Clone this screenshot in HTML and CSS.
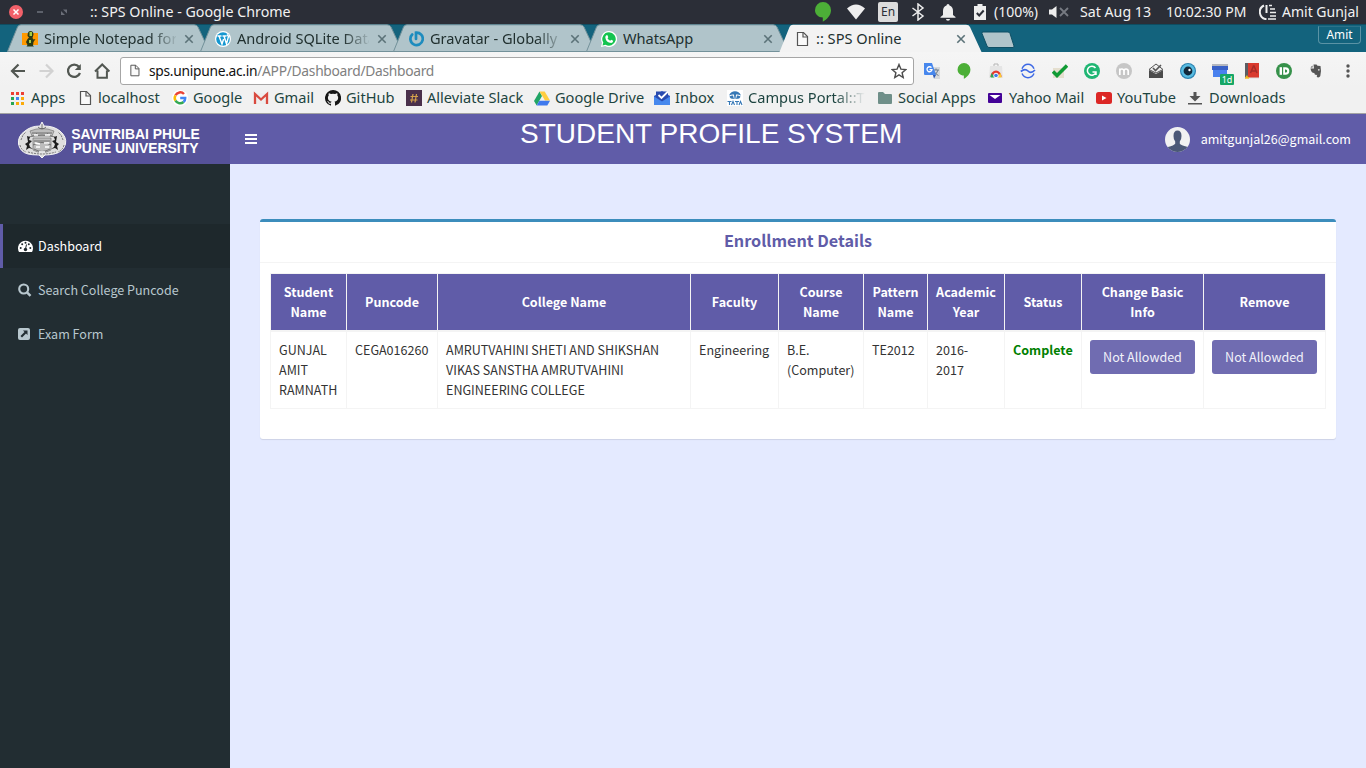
FILE: index.html
```html
<!DOCTYPE html>
<html lang="en">
<head>
<meta charset="utf-8">
<title>:: SPS Online</title>
<link rel="stylesheet" href="styles.css">
</head>
<body>
<svg class="defs" width="0" height="0">
  <defs>
    <symbol id="page" viewBox="0 0 16 16"><path d="M3.5 1.5h6l4 4v9h-10z" fill="#fafafa" stroke="#555" stroke-width="1.2"/><path d="M9 1.5v4.500h4.500" fill="none" stroke="#555" stroke-width="1.2"/></symbol>
    <symbol id="x" viewBox="0 0 10 10"><path d="M1.300 1.300l7.400 7.400M8.700 1.300L1.300 8.700" stroke="#5b7278" stroke-width="1.6"/></symbol>
    <symbol id="hang" viewBox="0 0 18 22"><path d="M9 1a8 8 0 0 0-8 8.300c0 4 3.300 7.200 7.800 7.200v4.200c4-2 8.200-6.300 8.200-11.400A8 8 0 0 0 9 1z" fill="#4caf37"/></symbol>
    <symbol id="tabshape" viewBox="0 0 204 28"><path d="M.5 27.500L10.500 3Q11.500.8 14 .8H187Q190 .8 191 3L202.500 27.500z" fill="#b0c4ca" stroke="#73919a"/></symbol>
  </defs>
</svg>

<div class="panel">
  <svg class="winctl" viewBox="0 0 80 24"><circle cx="16" cy="12" r="7" fill="#f2616a"/><path d="M13.500 9.500l5 5M18.500 9.500l-5 5" stroke="#fff" stroke-width="1.500"/><path d="M37 12h6" stroke="#6b6e78" stroke-width="1.600"/><path d="M63 9.500h4v4zM61 11v4h4z" fill="#6b6e78"/></svg>
  <span class="wintitle">:: SPS Online - Google Chrome</span>
  <div class="tray">
    <svg class="t-hang" viewBox="0 0 18 22"><use href="#hang"/></svg>
    <svg class="t-wifi" viewBox="0 0 20 16"><path d="M1 4.500Q10-3.500 19 4.500L10 15.500z" fill="#eee"/></svg>
    <span class="lang">En</span>
    <svg class="t-bt" viewBox="0 0 14 18"><path d="M1.500 5l10.500 8-5 4V1l5 4-10.500 8" fill="none" stroke="#eee" stroke-width="1.500"/></svg>
    <svg class="t-bell" viewBox="0 0 16 17"><path d="M8 0q1.500 0 1.500 1.500Q13 2.500 13 7v4l2.500 2v.800H.5V13L3 11V7q0-4.500 3.500-5.500Q6.500 0 8 0zM6 15h4q0 1.700-2 1.700T6 15z" fill="#eee"/></svg>
    <svg class="t-bat" viewBox="0 0 12 16"><path d="M3.500 0h5v2H12v14H0V2h3.500z" fill="#eee"/><path d="M2.800 9l2.400 2.500 4.500-5" fill="none" stroke="#2b2e37" stroke-width="2"/></svg>
    <span class="pct">(100%)</span>
    <svg class="t-vol" viewBox="0 0 22 12"><path d="M1 3.500h3L8.500 0v12L4 8.500H1z" fill="#eee"/><path d="M12 2l8 8M20 2l-8 8" stroke="#777a82" stroke-width="1.800"/></svg>
    <span class="date">Sat Aug 13</span>
    <span class="time">10:02:30 PM</span>
    <svg class="t-pow" viewBox="0 0 18 16"><path d="M5 1.500A7.200 7.200 0 0 0 7.500 15.200M7.500 1v8" fill="none" stroke="#eee" stroke-width="2"/><path d="M10 1.500h3M11 5h5M11 8.500h6M11 12h6M9 15h8" stroke="#eee" stroke-width="1.600"/></svg>
    <span class="who">Amit Gunjal</span>
  </div>
</div>

<div class="tabs">
  <div class="tab"><svg class="shape" viewBox="0 0 204 28"><use href="#tabshape"/></svg>
    <svg class="fav" viewBox="0 0 16 16"><path d="M0 2h16v12H0z" fill="#f90"/><path d="M8.500 0Q11.500 0 11.500 3.500L10.500 7l1 1.500 2-.5-2 3-.5 3.500 1 1H4.500l1-1.500-1.500-3L5.500 8 7 6.500 5.500 5Q5.500 0 8.500 0z" fill="#293a16"/><path d="M7.500 1h2.500v4H7.500zM7 9h2v3H7z" fill="#a6cc42"/></svg>
    <span class="label fade">Simple Notepad for</span><svg class="close"><use href="#x"/></svg></div>
  <div class="tab"><svg class="shape" viewBox="0 0 204 28"><use href="#tabshape"/></svg>
    <svg class="fav" viewBox="0 0 16 16"><circle cx="8" cy="8" r="8" fill="#fff"/><circle cx="8" cy="8" r="6.800" fill="#1597d0"/><path d="M2.500 5h4M4 5l3 8 1.600-5M7.500 5h4M9 5l2.500 8 2-7.500-1.500-2" fill="none" stroke="#fff" stroke-width="1.400"/></svg>
    <span class="label fade">Android SQLite Data</span><svg class="close"><use href="#x"/></svg></div>
  <div class="tab"><svg class="shape" viewBox="0 0 204 28"><use href="#tabshape"/></svg>
    <svg class="fav" viewBox="0 0 16 16"><path d="M4.200 3.500A6.200 6.200 0 1 0 8 1.700V8" fill="none" stroke="#1e8cbe" stroke-width="2.700" stroke-linecap="round"/></svg>
    <span class="label fade">Gravatar - Globally R</span><svg class="close"><use href="#x"/></svg></div>
  <div class="tab"><svg class="shape" viewBox="0 0 204 28"><use href="#tabshape"/></svg>
    <svg class="fav" viewBox="0 0 16 16"><path d="M8 0a8 8 0 0 0-7 11.800L0 16l4.200-1A8 8 0 1 0 8 0z" fill="#fff"/><path d="M8 1.300a6.700 6.700 0 0 0-5.700 10.200l-.8 3 3-.8A6.700 6.700 0 1 0 8 1.300z" fill="#13c34f"/><path d="M5.300 4.300l1.200 0 .8 2-.8 1q1 1.800 2.700 2.500l1-1 2 1q0 2-2 2.200Q5 11.500 4.300 6.500q0-1.500 1-2.200z" fill="#fff"/></svg>
    <span class="label">WhatsApp</span><svg class="close"><use href="#x"/></svg></div>
  <div class="tab active"><svg class="shape" viewBox="0 0 204 28"><path d="M.5 28L10.500 3Q11.500.8 14 .8H187Q190 .8 191 3L202.500 28z" fill="#f3f3f3"/></svg>
    <svg class="fav"><use href="#page"/></svg>
    <span class="label">:: SPS Online</span><svg class="close"><use href="#x"/></svg></div>
  <svg class="newtab" viewBox="0 0 34 18"><path d="M1 2.500Q.5 1 2 1h25q1.500 0 2 1.500l4 12.500q.3 1.500-1 1.500H8q-1.500 0-2-1.500z" fill="#b0c4ca" stroke="#0f4f64"/></svg>
  <span class="profile">Amit</span>
</div>

<div class="toolbar">
  <svg class="nav" viewBox="0 0 120 32" fill="none" stroke="#525752" stroke-width="2.200"><path d="M25 16H12.500M18.500 9.500L12 16l6.500 6.500"/><path d="M39.500 16H52M46 9.500l6.500 6.500-6.500 6.500" stroke="#d2d2d2"/><path d="M79 11.800A6.200 6.200 0 1 0 80 18"/><path d="M80.800 9v6h-6z" fill="#525752" stroke="none"/><path d="M95 16.500l7.200-7 7.200 7M97.500 15.500v7.200h9.400v-7.200" stroke-width="2"/></svg>
  <div class="omni">
    <svg class="doc"><use href="#page"/></svg>
    <span class="host">sps.unipune.ac.in</span><span class="path">/APP/Dashboard/Dashboard</span>
    <svg class="star" viewBox="0 0 16 16"><path d="M8 1.500l1.900 4.600 4.900.4-3.700 3.200 1.100 4.800L8 11.900l-4.200 2.600 1.100-4.800L1.200 6.500l4.900-.4z" fill="none" stroke="#4d4d4d" stroke-width="1.400"/></svg>
  </div>
  <div class="exts">
    <svg viewBox="0 0 16 16"><path d="M6 4h10v12H10z" fill="#d7d9dc"/><path d="M9 7h6M12 5.500V7M14 7q-1 4-4.500 5.500M10 8.500q2 3 4.500 4" fill="none" stroke="#6d7c8b"/><path d="M0 0h8l4 12H1q-1 0-1-1z" fill="#4787ed"/><path d="M9 12l3 0-2 3.500z" fill="#2b57b5"/><path d="M7.500 4.700A2.500 2.500 0 1 0 8 6.700H5.500" fill="none" stroke="#fff" stroke-width="1.300"/></svg>
    <svg viewBox="0.500 1 17 20"><use href="#hang" width="18" height="22"/></svg>
    <svg viewBox="0 0 16 16"><path d="M2 3h12l1 12H1z" fill="#e5e5e5"/><path d="M6 3V1h4v2" fill="none" stroke="#b5b5b5"/><path d="M2.500 14a5.500 6.500 0 0 1 11 0z" fill="#e53a2e"/><path d="M2.500 14l1-4L7 14.500H3z" fill="#2fa554"/><path d="M13.500 14l-1-4-4 4.500h5z" fill="#fdcc30"/><circle cx="8" cy="12.500" r="2.300" fill="#3f7ee8" stroke="#fff"/></svg>
    <svg viewBox="0 0 16 16" fill="none" stroke="#3c68e5" stroke-width="1.500"><path d="M2 5.800Q4 1.300 8 1.300t6 4.500M2 10.500Q4 14.700 8 14.700t6-4.200"/><path d="M.8 8.500Q5 5 8 8t7-1" stroke-width="1.700"/></svg>
    <svg viewBox="0 0 16 16"><path d="M1 5h11v10H1z" fill="#e5dfcf"/><path d="M1 8.500l4 4L15 2.500" fill="none" stroke="#109b35" stroke-width="3.500"/></svg>
    <svg viewBox="0 0 16 16"><circle cx="8" cy="8" r="8" fill="#1fb673"/><path d="M11.500 5A4.500 4.500 0 1 0 12 9.500M8.500 9H12v3" fill="none" stroke="#fff" stroke-width="1.500"/></svg>
    <svg viewBox="0 0 16 16"><circle cx="8" cy="8" r="8" fill="#c6c6c6"/><path d="M3.800 12V5.500M3.800 8q0-2 2-2T8 8v4M8 8q0-2 2-2t2.200 2v4" fill="none" stroke="#fff" stroke-width="1.700"/></svg>
    <svg viewBox="0 0 16 16"><path d="M1 6.500L8 1l7 5.500L8 10z" fill="#eee" stroke="#555"/><path d="M1 7l7 4 7-4v8H1z" fill="#4b4b4b"/><path d="M5 5l2.500 2.500L13 2" fill="none" stroke="#555" stroke-width="1.600"/></svg>
    <svg viewBox="0 0 16 16"><circle cx="8" cy="8" r="8" fill="#2b82b0"/><circle cx="8" cy="7.800" r="6.900" fill="#58bce2"/><circle cx="8" cy="8" r="4.400" fill="#12293b"/><circle cx="9.500" cy="7" r="1.200" fill="#fff"/></svg>
    <span class="cal"><svg viewBox="0 0 16 16"><path d="M0 1h16v3H0z" fill="#b5b8bf"/><path d="M0 3h16v4H0z" fill="#3961c7"/><path d="M1 7h14v7H1z" fill="#4a81ee"/></svg><b class="badge">1d</b></span>
    <svg viewBox="0 0 16 16"><path d="M1 0h14v15H1z" fill="#d93a2f"/><path d="M1 0h3v15H1z" fill="#5b5d63"/><path d="M6.500 10l3-7h.500l3 7M7.500 8h4.500" fill="none" stroke="#a52c29" stroke-width="1.500"/><path d="M1 15h14" stroke="#ddd"/><path d="M3 12l1 2h2l-1.500 1 .5 1-2-.5-2 .5.500-2z" fill="#f6b81a"/></svg>
    <svg viewBox="0 0 16 16"><circle cx="8" cy="8" r="8" fill="#36914a"/><rect x="3.600" y="4.200" width="2.400" height="7.600" fill="#fff"/><path d="M7.200 4.200h2.300a3.800 3.800 0 0 1 0 7.600H7.200z" fill="#fff"/><path d="M9 6.500h.7a1.500 1.500 0 0 1 0 3H9z" fill="#36914a"/></svg>
    <svg viewBox="0 0 16 16"><path d="M5.500 1.500h3l1 1.200 3 .4q1 4-.2 10-.8 1.700-3 1.200-1.300-1 0-2.500-3 .5-3-1.800-3 .2-3.800-4.500h3.500zM2.500 4.500l2-2v2z" fill="#555"/><circle cx="10.800" cy="6.800" r=".9" fill="#ddd"/></svg>
    <svg viewBox="0 0 16 16" fill="#555"><circle cx="8" cy="3" r="1.700"/><circle cx="8" cy="8" r="1.700"/><circle cx="8" cy="13" r="1.700"/></svg>
  </div>
</div>

<div class="bookmarks">
  <div class="bm w1"><svg viewBox="0 0 16 16"><path d="M1 2h3v3H1zM6 2h3v3H6zM11 2h3v3h-3z" fill="#ed4034"/><path d="M1 7h3v3H1z" fill="#28a653"/><path d="M6 7h3v3H6z" fill="#4285f4"/><path d="M11 7h3v3h-3z" fill="#fbab09"/><path d="M1 12h3v3H1z" fill="#28a653"/><path d="M6 12h3v3H6zM11 12h3v3h-3z" fill="#fbab09"/></svg><span>Apps</span></div>
  <div class="bm w2"><svg><use href="#page"/></svg><span>localhost</span></div>
  <div class="bm w3"><svg viewBox="0 0 16 16"><circle cx="8" cy="8" r="8" fill="#fff"/><g fill="none" stroke-width="2.500"><path d="M12 4A5.200 5.200 0 0 0 3.500 5.300" stroke="#ea4335"/><path d="M3.500 5.300a5.200 5.200 0 0 0 0 5.400" stroke="#fbbc05"/><path d="M3.500 10.700A5.200 5.200 0 0 0 11.500 12" stroke="#34a853"/><path d="M11.500 12A5 5 0 0 0 13.200 8H8.200" stroke="#4285f4"/></g></svg><span>Google</span></div>
  <div class="bm w4"><svg viewBox="0 0 16 16"><path d="M1 3h14v11H1z" fill="#eee"/><path d="M2 14V4l6 5.500L14 4v10" fill="none" stroke="#d94a3f" stroke-width="2.300"/></svg><span>Gmail</span></div>
  <div class="bm w5"><svg viewBox="0 0 16 16"><path fill="#161616" d="M8 0a8 8 0 0 0-2.530 15.590c.4.070.55-.17.550-.38v-1.490c-2.230.48-2.690-.94-2.690-.94-.36-.92-.89-1.170-.89-1.170-.73-.5.050-.49.050-.49.810.060 1.230.830 1.230.830.720 1.230 1.880.870 2.340.660.070-.52.280-.87.510-1.070C4.790 11.340 2.920 10.650 2.920 7.560c0-.87.310-1.590.83-2.150-.08-.2-.36-1.010.08-2.110 0 0 .67-.21 2.200.820a7.500 7.500 0 0 1 4 0c1.530-1.030 2.200-.82 2.200-.82.440 1.100.160 1.910.08 2.110.520.560.830 1.280.830 2.150 0 3.090-1.880 3.780-3.670 3.980.290.250.550.740.550 1.490v2.200c0 .21.140.46.550.38A8 8 0 0 0 8 0z"/></svg><span>GitHub</span></div>
  <div class="bm w6"><svg viewBox="0 0 16 16"><path d="M0 0h16v16H0z" fill="#4a304b"/><path d="M7 4L5.500 12.500M10.500 4L9 12.500M4.500 6.500h7.500M4 10h7.500" stroke="#d4a24b" stroke-width="1.200"/></svg><span>Alleviate Slack</span></div>
  <div class="bm w7"><svg viewBox="0 0 16 16"><path d="M5.500 1.500L0 11l2.700 4.500L8 6z" fill="#21a565"/><path d="M5.500 1.500h5.200L16 10.500h-5z" fill="#ffcd40"/><path d="M5.300 10.800H16l-2.700 4.700H2.700z" fill="#3f79ed"/></svg><span>Google Drive</span></div>
  <div class="bm w8"><svg viewBox="0 0 16 16"><path d="M0 6l8-5 8 5v9H0z" fill="#2f58c4"/><path d="M2 1.500h12v6l-6 4-6-4z" fill="#294baf"/><path d="M0 6.500l8 5 8-5V15H0z" fill="#4788ed"/><path d="M4.500 5l3 3L14 1.500" fill="none" stroke="#fff" stroke-width="1.800"/></svg><span>Inbox</span></div>
  <div class="bm w9"><svg viewBox="0 0 16 16"><path d="M0 0h16v16H0z" fill="#fff"/><path d="M2 5.500Q4 1.300 8 1.300t6 4.200Q11 4 9 4.500L8.500 9h-1L7 4.500Q5 4 2 5.500zM2.500 6.500Q5 5 6 5.500L7 9Q3 9 2.500 6.500zM13.500 6.500Q11 5 10 5.500L9 9q4 0 4.500-2.500z" fill="#3678b6"/><path d="M.5 11.500h4M2.500 11.500V15M4.500 15L6 11.500 7.500 15M8 11.500h4M10 11.500V15M12 15l1.500-3.500L15 15" fill="none" stroke="#3678b6" stroke-width="1.100"/></svg><span class="bmfade">Campus Portal::T</span></div>
  <div class="bm w10"><svg viewBox="0 0 16 16"><path d="M1 3q0-1 1-1h4l2 2h6q1 0 1 1v8q0 1-1 1H2q-1 0-1-1z" fill="#6f8f89"/></svg><span>Social Apps</span></div>
  <div class="bm w11"><svg viewBox="0 0 16 16"><rect x="0" y="3" width="14" height="10" rx="1" fill="#430297"/><path d="M1.500 5L7 9l5.500-4" fill="#fff"/></svg><span>Yahoo Mail</span></div>
  <div class="bm w12"><svg viewBox="0 0 16 16"><rect x="0" y="2" width="16" height="12" rx="2.500" fill="#dc2725"/><path d="M6 5.500v5L10.500 8z" fill="#fff"/></svg><span>YouTube</span></div>
  <div class="bm w13"><svg viewBox="0 0 16 16"><path d="M5.500 2h3v4h4L7 11.500 1.500 6h4zM0 13h14v1.600H0z" fill="#555"/></svg><span>Downloads</span></div>
</div>

<div class="app">
  <header class="header">
    <div class="logo">
      <svg viewBox="0 0 50 38"><path d="M25 1l2 4q10 0 16 5 7 6 5.500 13-2 8-11.500 10-5 1-9 1l-3 3-3-3q-7 0-11-1Q3 31 1.500 23q-1-8 6.500-13Q14 5 23 5z" fill="#dedede" stroke="#f4f4f4"/><path d="M13 10q12-5 24 0l-2 5H15zM16 17h18v12q-9 5-18 0z" fill="#bdbdbd" stroke="#777" stroke-width=".7"/><path d="M15 12h20M12 16q13-4 26 0M17 20h16M16 24q9-5 18 0M17 28q8 5 16 0M25 3v5M21 6q4 4 8 0" fill="none" stroke="#5c5c5c" stroke-width=".8"/><path d="M10 15l3 1-1 3 3 1-3 3 1 3 3 2-4-1-3 2 1-4-2-2 3-2zM40 15l-3 1 1 3-3 1 3 3-1 3-3 2 4-1 3 2-1-4 2-2-3-2z" fill="#1d1d1d"/><path d="M4 19l2-5 3-3M3 24q1 5 6 7M46 19l-2-5-3-3M47 24q-1 5-6 7M11 31q14 4 28 0M19 12l3 3M31 12l-3 3" fill="none" stroke="#777" stroke-dasharray="2 1"/><path d="M17 14h4M28 14h5M18 22l5 1M27 22h5M19 26h4M28 26h4M22 31h6" stroke="#fff" stroke-width="1.400"/></svg>
      <div class="uni">SAVITRIBAI PHULE<br>PUNE UNIVERSITY</div>
    </div>
    <div class="topnav">
      <svg class="burger" viewBox="0 0 12 10"><path d="M0 1h12M0 5h12M0 9h12" stroke="#fff" stroke-width="2"/></svg>
      <h1>STUDENT PROFILE SYSTEM</h1>
      <div class="user">
        <svg viewBox="0 0 25 25"><defs><clipPath id="av"><circle cx="12.500" cy="12.500" r="12.500"/></clipPath></defs><g clip-path="url(#av)"><path d="M0 0h25v25H0z" fill="#f1f1f2"/><path d="M8.500 9q0-5.500 4-5.500t4 5.500q0 4-1.700 5.500v2.300q1 1.500 7.200 3V26H3v-6q6-1.500 7.200-3.200v-2.300Q8.500 13 8.500 9z" fill="#4b5877"/></g></svg>
        <span>amitgunjal26@gmail.com</span>
      </div>
    </div>
  </header>
  <div class="body">
    <nav class="sidebar">
      <a class="item on"><svg viewBox="0.500 0 16 14"><path d="M1.500 13A7.500 7.500 0 1 1 14.500 13z" fill="#fff"/><g fill="#1e282c"><circle cx="3.200" cy="9" r="1"/><circle cx="4.700" cy="5.300" r="1"/><circle cx="8" cy="3.700" r="1"/><circle cx="11.300" cy="5.300" r="1"/><circle cx="12.800" cy="9" r="1"/><circle cx="8" cy="10.500" r="1.700"/></g><path d="M8 10l1-4.500" stroke="#1e282c"/></svg><span>Dashboard</span></a>
      <a class="item"><svg viewBox="0 0 16 14"><circle cx="5.700" cy="6" r="4.500" fill="none" stroke="#b8c7ce" stroke-width="2.100"/><path d="M9 9.300l3.500 3.500" stroke="#b8c7ce" stroke-width="2.500"/></svg><span>Search College Puncode</span></a>
      <a class="item"><svg viewBox="0 0 16 14"><rect x="0" y="1" width="12" height="12" rx="2" fill="#b8c7ce"/><path d="M5 3.500h4.500V8L8 6.500l-4 4L2.500 9l4-4z" fill="#222d32"/></svg><span>Exam Form</span></a>
    </nav>
    <main class="content">
      <section class="box">
        <h2>Enrollment Details</h2>
        <div class="boxbody">
          <table>
            <colgroup><col class="c1"><col class="c2"><col class="c3"><col class="c4"><col class="c5"><col class="c6"><col class="c7"><col class="c7"><col class="c8"><col class="c8"></colgroup>
            <thead><tr><th>Student Name</th><th>Puncode</th><th>College Name</th><th>Faculty</th><th>Course Name</th><th>Pattern Name</th><th>Academic Year</th><th>Status</th><th>Change Basic<br>Info</th><th>Remove</th></tr></thead>
            <tbody><tr><td>GUNJAL<br>AMIT<br>RAMNATH</td><td>CEGA016260</td><td>AMRUTVAHINI SHETI AND SHIKSHAN<br>VIKAS SANSTHA AMRUTVAHINI<br>ENGINEERING COLLEGE</td><td>Engineering</td><td>B.E.<br>(Computer)</td><td>TE2012</td><td>2016-<br>2017</td><td class="ok">Complete</td><td><button>Not Allowded</button></td><td><button>Not Allowded</button></td></tr></tbody>
          </table>
        </div>
      </section>
    </main>
  </div>
</div>
</body>
</html>
```

FILE: styles.css
```css
* { box-sizing: border-box; }
body { margin: 0; width: 1366px; height: 768px; overflow: hidden; font-family: "Noto Sans", sans-serif; font-size: 14.6px; display: flex; flex-direction: column; }
svg { display: block; flex: none; }
span { white-space: nowrap; }
.defs { position: absolute; }

/* desktop panel */
.panel { height: 24px; flex: none; background: #2b2e37; color: #f2f2f2; display: flex; align-items: center; font-size: 14px; line-height: 24px; }
.winctl { width: 80px; height: 24px; }
.wintitle { padding-left: 10px; font-size: 14.250px; }
.tray { margin-left: auto; display: flex; align-items: center; height: 24px; width: 552px; }
.t-hang { width: 18px; height: 22px; }
.t-wifi { width: 20px; height: 16px; margin-left: 14px; }
.lang { width: 20px; height: 20px; margin-left: 12px; background: #dcdcdc; color: #2b2e37; border-radius: 2px; font-size: 12px; line-height: 20px; text-align: center; }
.t-bt { width: 14px; height: 18px; margin-left: 13px; }
.t-bell { width: 16px; height: 17px; margin-left: 15px; }
.t-bat { width: 12px; height: 16px; margin-left: 18px; }
.pct { margin-left: 8px; width: 46px; }
.t-vol { width: 22px; height: 12px; margin-left: 8px; }
.date { width: 86px; margin-left: 10px; font-size: 14.2px; }
.time { width: 93px; }
.t-pow { width: 18px; height: 16px; }
.who { margin-left: 5px; }

/* tab strip */
.tabs { height: 28px; flex: none; background: #13637d; display: flex; padding-left: 7px; border-top: 1px solid #0e4c61; }
.tab { position: relative; width: 204px; height: 28px; margin-right: -11px; display: flex; align-items: center; padding: 0 12px 2px 15px; flex: none; margin-top: -1px; }
.tab.active { z-index: 2; }
.shape { position: absolute; inset: 0; width: 204px; height: 28px; }
.fav { position: relative; width: 16px; height: 16px; margin-top: 4px; }
.label { position: relative; margin-left: 6px; width: 132px; overflow: hidden; color: #21302f; line-height: 24px; margin-top: 2px; }
.fade { -webkit-mask-image: linear-gradient(90deg, #000 80%, transparent 102%); mask-image: linear-gradient(90deg, #000 80%, transparent 102%); }
.close { position: relative; width: 10px; height: 10px; margin-left: 8px; margin-top: 4px; }
.newtab { width: 34px; height: 18px; margin: 6px 0 0 9px; }
.profile { margin: 1px 5px 0 auto; height: 18px; width: 43px; border: 1px solid #5a93a5; border-top-color: #2c7289; border-radius: 0 0 4px 4px; color: #fff; font-size: 11.8px; line-height: 15px; text-align: center; }

/* toolbar */
.toolbar { height: 35px; flex: none; display: flex; align-items: center; background: linear-gradient(#f5f5f5, #f1f1f1); padding-top: 2px; }
.nav { width: 120px; height: 32px; }
.omni { width: 794px; height: 28px; border: 1px solid #a6a6a6; border-radius: 3px; background: #fff; display: flex; align-items: center; padding: 0 6px 1px 6px; font-size: 13.8px; letter-spacing: -.29px; margin-top: 1px; }
.doc { width: 15px; height: 13px; margin-right: 7px; }
.host { color: #111; }
.path { color: #808080; }
.star { width: 16px; height: 16px; margin-left: auto; }
.exts { display: flex; gap: 16px; margin-left: 10px; padding-top: 1px; }
.exts > svg, .cal, .cal svg { width: 16px; height: 16px; }
.cal { position: relative; }
.badge { position: absolute; left: 8px; top: 11px; width: 14px; height: 11px; background: #16a765; color: #fff; font: 9px/11px "Noto Sans", sans-serif; text-align: center; border-radius: 1px; }

/* bookmarks bar */
.bookmarks { height: 27px; flex: none; display: flex; background: #f1f1f1; border-bottom: 1px solid #a3a3a3; padding-left: 10px; }
.bm { display: flex; align-items: center; flex: none; color: #1d4440; line-height: 22px; height: 22px; margin-top: -1px; }
.bm svg { width: 16px; height: 16px; margin: 2px 5px 0 0; }
.w1 { width: 67px; } .w2 { width: 95px; } .w3 { width: 81px; } .w4 { width: 72px; } .w5 { width: 81px; } .w6 { width: 128px; } .w7 { width: 120px; } .w8 { width: 73px; } .w9 { width: 150px; } .w10 { width: 111px; } .w11 { width: 108px; } .w12 { width: 92px; } .w13 { width: 110px; }
.bmfade { width: 117px; overflow: hidden; -webkit-mask-image: linear-gradient(90deg, #000 74%, transparent 100%); mask-image: linear-gradient(90deg, #000 74%, transparent 100%); }

/* application */
.app { flex: 1; display: flex; flex-direction: column; font-family: "Noto Sans CJK JP", "Noto Sans CJK SC", sans-serif; font-size: 12.55px; line-height: 20px; color: #333; }
.header { height: 50px; display: flex; flex: none; }
.logo { width: 230px; background: #565299; display: flex; padding: 7px 0 0 17px; }
.logo svg { width: 50px; height: 38px; }
.uni { width: 137px; color: #fff; font: bold 13.9px/14px "Liberation Sans", Arial, sans-serif; text-align: center; padding-top: 6px; white-space: nowrap; }
.topnav { flex: 1; background: #605ca8; display: grid; grid-template-columns: 290px 382px 1fr; color: #fff; }
.burger { width: 12px; height: 10px; margin: 20px 0 0 15px; }
h1 { margin: 0; font: 28px/32px "Liberation Sans", Arial, sans-serif; padding-top: 4px; white-space: nowrap; }
.user { display: flex; align-items: center; justify-content: flex-end; padding-right: 15px; }
.user svg { width: 25px; height: 25px; margin-right: 11px; }
.body { flex: 1; display: flex; }
.sidebar { width: 230px; background: #222d32; padding-top: 60px; }
.item { height: 44px; display: flex; align-items: center; padding-left: 15px; border-left: 3px solid transparent; color: #b8c7ce; }
.item svg { width: 16px; height: 14px; margin-right: 4px; }
.item.on { background: #1e282c; border-left-color: #605ca8; color: #fff; }
.content { flex: 1; background: #e4eaff; padding: 55px 30px 0; }
.box { background: #fff; border-top: 3px solid #3c8dbc; border-radius: 3px; box-shadow: 0 1px 1px rgba(0,0,0,.1); height: 220px; }
h2 { margin: 0; height: 41px; border-bottom: 1px solid #f4f4f4; text-align: center; color: #605ca8; font-size: 16.2px; line-height: 36px; font-weight: 700; }
.boxbody { padding: 10px; }
table { width: 1056px; border-collapse: collapse; table-layout: fixed; }
.c1 { width: 76px; } .c2 { width: 91px; } .c3 { width: 253px; } .c4 { width: 88px; } .c5 { width: 85px; } .c6 { width: 64px; } .c7 { width: 77px; } .c8 { width: 122px; }
th, td { border: 1px solid #f4f4f4; padding: 8px; line-height: 20px; }
th { background: #605ca8; color: #fff; font-weight: 700; border-bottom-width: 2px; vertical-align: middle; }
td { vertical-align: top; text-align: left; white-space: nowrap; }
.ok { color: green; font-weight: 700; }
button { display: block; width: 105px; height: 34px; border: 0; border-radius: 3px; background: #706cb1; color: #f2f2fa; font: inherit; padding: 0; }
```
